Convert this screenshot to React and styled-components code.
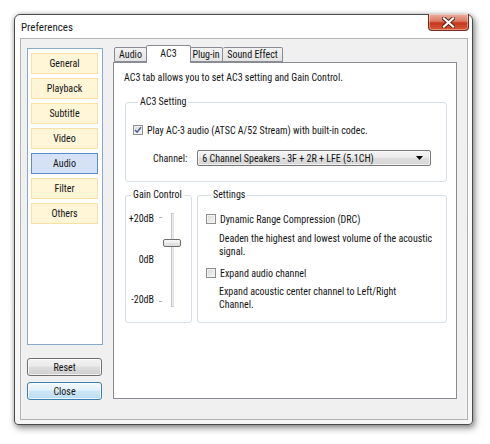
import React from 'react'
import styled, { createGlobalStyle } from 'styled-components'

const GlobalStyle = createGlobalStyle`
  html, body {
    margin: 0;
    background: #fff;
  }
  body {
    font-family: "Roboto Condensed", Roboto, "Liberation Sans", sans-serif;
    font-stretch: condensed;
    font-size: 10px;
    color: #141414;
  }
`;

const Desktop = styled.div`
  width: 490px;
  height: 444px;
  padding: 14px 0 0 14px;
  box-sizing: border-box;
`;

const Window = styled.div`
  width: 459px;
  height: 411px;
  box-sizing: border-box;
  border: 1px solid #4a4a4a;
  border-radius: 6px 6px 4px 4px;
  background: linear-gradient(#ffffff, #f6f6f6);
  box-shadow: 2px 3px 7px rgba(0, 0, 0, 0.45), 0 0 4px rgba(0, 0, 0, 0.2);
  display: flex;
  flex-direction: column;
`;

const TitleBar = styled.div`
  height: 23px;
  display: flex;
  align-items: flex-start;
  justify-content: space-between;
  padding-left: 6px;
`;

const Title = styled.span`
  font-size: 11px;
  margin-top: 6px;
  color: #1a1a1a;
`;

const CloseButton = styled.div`
  width: 41px;
  height: 17px;
  margin-top: -1px;
  margin-right: 3px;
  box-sizing: border-box;
  border: 1px solid #7a2c1f;
  border-top: none;
  border-radius: 0 0 4px 4px;
  background: linear-gradient(#eab0a3 0%, #dc7a63 45%, #c7391c 55%, #d55a3a 100%);
  box-shadow: inset 0 0 0 1px rgba(255, 255, 255, 0.35);
  display: flex;
  align-items: center;
  justify-content: center;
`;

const Client = styled.div`
  flex: 1;
  margin: 0 4px 4px 5px;
  border: 1px solid #b4b4b4;
  background: #f0f0f0;
  display: flex;
  gap: 10px;
  padding: 6px 10px 19px 6px;
`;

const Sidebar = styled.div`
  width: 76px;
  display: flex;
  flex-direction: column;
  padding-top: 3px;
`;

const NavList = styled.div`
  height: 297px;
  box-sizing: border-box;
  border: 1px solid #87a9cb;
  background: #fff;
  padding: 4px 4px 0 3px;
  display: flex;
  flex-direction: column;
  gap: 4px;
`;

const NavItem = styled.div`
  height: 21px;
  box-sizing: border-box;
  border: 1px solid ${p => (p.$active ? '#5d8ad2' : '#fbe0a4')};
  background: ${p => (p.$active ? '#d5e2f5' : '#fff5d7')};
  display: flex;
  align-items: center;
  justify-content: center;
`;

const PushButton = styled.div`
  width: 75px;
  height: 18px;
  box-sizing: border-box;
  border: 1px solid ${p => (p.$default ? '#3c7fb1' : '#707070')};
  border-radius: 3px;
  background: ${p =>
    p.$default
      ? 'linear-gradient(#f2f9fd 0%, #e3f1fa 45%, #cde6f6 50%, #bcdcf1 100%)'
      : 'linear-gradient(#f2f2f2 0%, #ebebeb 45%, #dddddd 50%, #cfcfcf 100%)'};
  box-shadow: inset 0 0 0 1px rgba(255, 255, 255, 0.7);
  display: flex;
  align-items: center;
  justify-content: center;
  margin-top: ${p => p.$gap}px;
`;

const TabArea = styled.div`
  flex: 1;
  display: flex;
  flex-direction: column;
`;

const TabStrip = styled.div`
  display: flex;
  align-items: flex-end;
  height: 17px;
  padding-left: 1px;
`;

const Tab = styled.div`
  width: ${p => p.$w}px;
  height: ${p => (p.$active ? 18 : 15)}px;
  box-sizing: border-box;
  padding-top: ${p => (p.$active ? 2 : 1)}px;
  margin: ${p => (p.$active ? '0 -1px -1px' : '0')};
  border: 1px solid #898c95;
  border-bottom: ${p => (p.$active ? 'none' : '1px solid #898c95')};
  border-left: ${p => (p.$first || p.$active ? '1px solid #898c95' : 'none')};
  border-radius: 2px 2px 0 0;
  background: ${p => (p.$active ? '#fff' : 'linear-gradient(#f2f2f2, #e3e3e3)')};
  position: relative;
  z-index: ${p => (p.$active ? 1 : 0)};
  text-align: center;
  white-space: nowrap;
`;

const Pane = styled.div`
  height: 337px;
  box-sizing: border-box;
  border: 1px solid #898c95;
  background: #fff;
  padding: 9px 9px 0 11px;
  display: flex;
  flex-direction: column;
`;

const Intro = styled.div`
  margin-left: -1px;
  height: 14px;
  line-height: 12px;
`;

const Group = styled.fieldset`
  margin: ${p => p.$mt || 0}px 0 0;
  border: 1px solid #d5dfe5;
  border-radius: 3px;
  padding: ${p => p.$pad || '0'};
  min-width: 0;
  box-sizing: border-box;
  height: ${p => p.$h}px;
  width: ${p => (p.$w ? `${p.$w}px` : 'auto')};
`;

const Legend = styled.legend`
  padding: 0 2px;
  margin-left: 5px;
  line-height: 12px;
  white-space: nowrap;
`;

const Row = styled.div`
  display: flex;
  gap: 5px;
  margin-top: ${p => p.$mt || 0}px;
`;

const CheckRow = styled.label`
  display: flex;
  align-items: center;
  gap: 4px;
  height: 12px;
  white-space: nowrap;
`;

const Box = styled.span`
  width: 10px;
  height: 10px;
  box-sizing: border-box;
  border: 1px solid #8e8f8f;
  background: linear-gradient(135deg, #d8d8d8, #f6f6f6);
  box-shadow: inset 0 0 0 1px #f2f2f2;
  display: inline-flex;
  align-items: center;
  justify-content: center;
  flex: none;
`;

const ChannelRow = styled.div`
  display: flex;
  align-items: center;
  gap: 10px;
  margin: 14px 0 0 20px;
`;

const Select = styled.div`
  width: 234px;
  height: 16px;
  box-sizing: border-box;
  border: 1px solid #7a7a7a;
  border-radius: 2px;
  background: linear-gradient(#f4f4f4 0%, #ececec 45%, #dedede 50%, #d6d6d6 100%);
  box-shadow: inset 0 0 0 1px rgba(255, 255, 255, 0.6);
  display: flex;
  align-items: center;
  justify-content: space-between;
  padding: 0 7px 0 4px;
  white-space: nowrap;
`;

const GainBody = styled.div`
  display: flex;
  height: 96px;
  margin-top: 12px;
`;

const Scale = styled.div`
  width: 28px;
  display: flex;
  flex-direction: column;
  justify-content: space-between;
  align-items: flex-end;
  padding-bottom: 3px;
  line-height: 12px;
`;

const Ticks = styled.div`
  width: 3px;
  margin: 4px 0 0 5px;
  height: 85px;
  display: flex;
  flex-direction: column;
  justify-content: space-between;
`;

const Tick = styled.span`
  display: block;
  height: 1px;
  background: #b0b0b0;
`;

const SliderBox = styled.div`
  width: 20px;
  display: flex;
  justify-content: center;
  position: relative;
`;

const Track = styled.div`
  width: 1px;
  height: 92px;
  border: 1px solid #c4c4c4;
  border-right-color: #e4e4e4;
  background: #ececec;
`;

const Thumb = styled.div`
  position: absolute;
  top: 26px;
  left: 1px;
  width: 18px;
  height: 8px;
  box-sizing: border-box;
  border: 1px solid #707070;
  border-radius: 2px;
  background: linear-gradient(#fafafa, #dadada);
`;

const Option = styled.div`
  margin-top: ${p => p.$mt}px;
`;

const Note = styled.div`
  margin: ${p => p.$mt}px 0 0 13px;
  line-height: 13px;
`;

function Check({ checked }) {
  return (
    <Box>
      {checked && (
        <svg width="8" height="8" viewBox="0 0 8 8">
          <path d="M1 4 L3.1 6.2 L7 1.2" fill="none" stroke="#4a5f97" strokeWidth="1.5" />
        </svg>
      )}
    </Box>
  );
}

const sections = ['General', 'Playback', 'Subtitle', 'Video', 'Audio', 'Filter', 'Others'];
const tabs = [
  { label: 'Audio', w: 33 },
  { label: 'AC3', w: 45 },
  { label: 'Plug-in', w: 33 },
  { label: 'Sound Effect', w: 60 },
];

export default function App() {
  return (
    <Desktop>
      <GlobalStyle />
      <Window>
        <TitleBar>
          <Title>Preferences</Title>
          <CloseButton>
            <svg width="13" height="11" viewBox="0 0 13 11">
              <path d="M2 1.5 L11 9.5 M11 1.5 L2 9.5" stroke="#5a2015" strokeWidth="4" strokeLinecap="square" />
              <path d="M2 1.5 L11 9.5 M11 1.5 L2 9.5" stroke="#fff" strokeWidth="2.2" strokeLinecap="square" />
            </svg>
          </CloseButton>
        </TitleBar>
        <Client>
          <Sidebar>
            <NavList>
              {sections.map(s => (
                <NavItem key={s} $active={s === 'Audio'}>{s}</NavItem>
              ))}
            </NavList>
            <PushButton $gap={13}>Reset</PushButton>
            <PushButton $gap={6} $default>Close</PushButton>
          </Sidebar>
          <TabArea>
            <TabStrip>
              {tabs.map((t, i) => (
                <Tab key={t.label} $w={t.w} $active={t.label === 'AC3'} $first={i === 0}>
                  {t.label}
                </Tab>
              ))}
            </TabStrip>
            <Pane>
              <Intro>AC3 tab allows you to set AC3 setting and Gain Control.</Intro>
              <Group $h={86} $mt={10} $pad="16px 0 0 7px">
                <Legend>AC3 Setting</Legend>
                <CheckRow>
                  <Check checked />
                  Play AC-3 audio (ATSC A/52 Stream) with built-in codec.
                </CheckRow>
                <ChannelRow>
                  <span>Channel:</span>
                  <Select>
                    <span>6 Channel Speakers - 3F + 2R + LFE (5.1CH)</span>
                    <svg width="7" height="4" viewBox="0 0 7 4">
                      <path d="M0 0 H7 L3.5 4 Z" fill="#000" />
                    </svg>
                  </Select>
                </ChannelRow>
              </Group>
              <Row $mt={7}>
                <Group $w={67} $h={134}>
                  <Legend>Gain Control</Legend>
                  <GainBody>
                    <Scale>
                      <span>+20dB</span>
                      <span>0dB</span>
                      <span>-20dB</span>
                    </Scale>
                    <Ticks>
                      <Tick />
                      <Tick />
                    </Ticks>
                    <SliderBox>
                      <Track />
                      <Thumb />
                    </SliderBox>
                  </GainBody>
                </Group>
                <Group $w={250} $h={134} $pad="0 0 0 8px">
                  <Legend>Settings</Legend>
                  <Option $mt={12}>
                    <CheckRow>
                      <Check />
                      Dynamic Range Compression (DRC)
                    </CheckRow>
                    <Note $mt={7}>
                      Deaden the highest and lowest volume of the acoustic
                      <br />
                      signal.
                    </Note>
                  </Option>
                  <Option $mt={9}>
                    <CheckRow>
                      <Check />
                      Expand audio channel
                    </CheckRow>
                    <Note $mt={6}>
                      Expand acoustic center channel to Left/Right
                      <br />
                      Channel.
                    </Note>
                  </Option>
                </Group>
              </Row>
            </Pane>
          </TabArea>
        </Client>
      </Window>
    </Desktop>
  );
}
